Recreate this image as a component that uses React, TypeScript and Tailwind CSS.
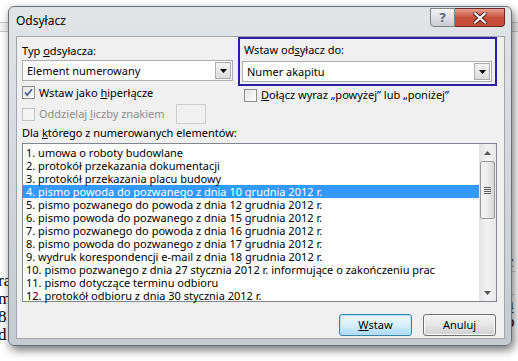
import React from 'react';

const items = [
  '1. umowa o roboty budowlane',
  '2. protokół przekazania dokumentacji',
  '3. protokół przekazania placu budowy',
  '4. pismo powoda do pozwanego z dnia 10 grudnia 2012 r.',
  '5. pismo pozwanego do powoda z dnia 12 grudnia 2012 r.',
  '6. pismo powoda do pozwanego z dnia 15 grudnia 2012 r.',
  '7. pismo pozwanego do powoda z dnia 16 grudnia 2012 r.',
  '8. pismo powoda do pozwanego z dnia 17 grudnia 2012 r.',
  '9. wydruk korespondencji e-mail z dnia 18 grudnia 2012 r.',
  '10. pismo pozwanego z dnia 27 stycznia 2012 r. informujące o zakończeniu prac',
  '11. pismo dotyczące terminu odbioru',
  '12. protokół odbioru z dnia 30 stycznia 2012 r.',
];

const DropArrow = () => (
  <div className="w-[16px] h-[17px] border border-[#a8acb1] bg-gradient-to-b from-[#f4f4f4] to-[#dcdcdc] flex items-center justify-center">
    <svg width="7" height="4" viewBox="0 0 7 4">
      <path d="M0 0h7L3.5 4z" fill="#000" />
    </svg>
  </div>
);

const Combo = ({ value, width }: { value: string; width: string }) => (
  <div className={`${width} h-[21px] border border-[#abadb3] bg-white flex items-center justify-between pl-[4px] pr-[1px]`}>
    <span>{value}</span>
    <DropArrow />
  </div>
);

const CheckBox = ({ checked, disabled }: { checked?: boolean; disabled?: boolean }) => (
  <div
    className={`w-[13px] h-[13px] border flex items-center justify-center shrink-0 ${
      disabled ? 'border-[#c4c4c4] bg-[#f4f4f4]' : 'border-[#8e8f8f] bg-gradient-to-br from-[#e6e6e6] to-[#fbfbfb]'
    }`}
  >
    {checked && (
      <svg width="9" height="9" viewBox="0 0 9 9">
        <path d="M1 4.5l2.2 2.6L8 1.2" stroke="#4a5f8f" strokeWidth="1.8" fill="none" />
      </svg>
    )}
  </div>
);

const Btn = ({ children, primary }: { children: React.ReactNode; primary?: boolean }) => (
  <div
    className={`w-[73px] h-[22px] rounded-[3px] border flex items-center justify-center ${
      primary
        ? 'border-[#3c7fb1] bg-gradient-to-b from-[#eaf6fd] via-[#d9f0fc] to-[#a7d9f5] shadow-[inset_0_0_0_1px_#b7e2fb]'
        : 'border-[#707070] bg-gradient-to-b from-[#f2f2f2] via-[#e6e6e6] to-[#d0d0d0] shadow-[inset_0_0_0_1px_#fcfcfc]'
    }`}
  >
    {children}
  </div>
);

const ScrollBar = () => (
  <div className="w-[17px] h-full bg-gradient-to-r from-[#e3e3e3] via-[#f3f3f3] to-[#e8e8e8] flex flex-col items-center">
    <div className="h-[17px] w-full flex items-center justify-center">
      <svg width="7" height="4" viewBox="0 0 7 4">
        <path d="M0 4h7L3.5 0z" fill="#555" />
      </svg>
    </div>
    <div className="w-[15px] h-[58px] rounded-[2px] border border-[#9a9a9a] bg-gradient-to-r from-[#f4f4f4] via-[#ececec] to-[#d6d6d6] flex flex-col items-center justify-center gap-[1px]">
      <div className="w-[7px] h-[1px] bg-[#5d5d5d]" />
      <div className="w-[7px] h-[1px] bg-[#5d5d5d]" />
      <div className="w-[7px] h-[1px] bg-[#5d5d5d]" />
      <div className="w-[7px] h-[1px] bg-[#5d5d5d]" />
    </div>
    <div className="flex-1" />
    <div className="h-[17px] w-full flex items-center justify-center">
      <svg width="7" height="4" viewBox="0 0 7 4">
        <path d="M0 0h7L3.5 4z" fill="#555" />
      </svg>
    </div>
  </div>
);

export default function App() {
  return (
    <div className="relative w-[518px] h-[361px] bg-white overflow-hidden text-[11px] text-black" style={{ fontFamily: '"Noto Sans", sans-serif' }}>
      {/* document behind the dialog */}
      <div className="absolute inset-0" style={{ fontFamily: '"Liberation Serif", serif' }}>
        <div className="h-[22px]" />
        <div className="h-[10px] border-y border-[#c8c8c8] bg-[#f3f3f3]" />
        <div className="absolute left-[-2px] top-[272px] text-[17px] leading-[18px]">
          <div>ra</div>
          <div>m</div>
          <div>8</div>
          <div>d</div>
        </div>
        <div className="absolute left-[506px] top-[253px] text-[17px] leading-[18px]">
          <div>c</div>
          <div className="h-[24px] border-y border-[#d0d0d0]" />
          <div>ą</div>
          <div>o</div>
        </div>
      </div>

      {/* dialog window */}
      <div className="absolute left-[8px] top-[6px] w-[504px] h-[340px] rounded-[6px] border border-[#6a6f73] bg-gradient-to-b from-[#e2e5e8] via-[#d3d7db] to-[#c5cacf] shadow-[2px_4px_10px_rgba(0,0,0,0.55)] flex flex-col pl-[7px] pr-[6px] pb-[6px]">
        <div className="h-[29px] flex items-start justify-between shrink-0">
          <span className="self-center pb-[1px] text-[12px]">Odsyłacz</span>
          <div className="flex pt-[1px]">
            <div className="w-[25px] h-[19px] rounded-bl-[4px] border border-[#7d8287] bg-gradient-to-b from-[#f1f3f5] via-[#dde1e5] to-[#c8cdd2] flex items-center justify-center text-[13px] font-bold text-[#5b6068]">
              ?
            </div>
            <div className="w-[50px] h-[19px] rounded-br-[4px] border border-l-0 border-[#6b2a22] bg-gradient-to-b from-[#e8a093] via-[#c9503d] to-[#c44a36] flex items-center justify-center">
              <svg width="14" height="12" viewBox="0 0 14 12">
                <path d="M2 1.5l10 9M12 1.5l-10 9" stroke="#4a1b14" strokeWidth="4" strokeLinecap="square" />
                <path d="M2 1.5l10 9M12 1.5l-10 9" stroke="#fff" strokeWidth="2.2" strokeLinecap="square" />
              </svg>
            </div>
          </div>
        </div>

        <div className="flex-1 bg-[#f0f0f0] border border-[#a0a6ac] flex flex-col pl-[5px] pr-[7px] leading-[16px]">
          <div className="flex gap-[5px]">
            <div className="w-[211px] flex flex-col pt-[6px]">
              <span>
                Typ <u>o</u>dsyłacza:
              </span>
              <div className="mt-[1px]">
                <Combo value="Element numerowany" width="w-[211px]" />
              </div>
              <div className="h-[17px] mt-[3px] flex items-center gap-[4px]">
                <CheckBox checked />
                <span className="whitespace-nowrap">
                  Wstaw jako <u>h</u>iperłącze
                </span>
              </div>
              <div className="h-[20px] mt-[3px] flex items-center">
                <CheckBox disabled />
                <span className="ml-[4px] w-[137px] whitespace-nowrap text-[#8d8d8d]">
                  Oddzielaj <u>l</u>iczby znakiem
                </span>
                <div className="w-[30px] h-[20px] border border-[#cdcdcd] bg-[#f0f0f0]" />
              </div>
            </div>
            <div className="flex-1 flex flex-col">
              <div className="border-2 border-[#2b1fa0] pt-[3px] pl-[2px] pr-[3px] pb-[2px]">
                <div className="pl-[2px]">
                  Wstaw od<u>s</u>yłacz do:
                </div>
                <div className="mt-[3px]">
                  <Combo value="Numer akapitu" width="w-full" />
                </div>
              </div>
              <div className="h-[18px] ml-[6px] flex items-center gap-[4px]">
                <CheckBox />
                <span className="whitespace-nowrap">
                  <u>D</u>ołącz wyraz „powyżej” lub „poniżej”
                </span>
              </div>
            </div>
          </div>

          <div className="mt-[1px]">
            Dla <u>k</u>tórego z numerowanych elementów:
          </div>
          <div className="mt-[2px] h-[159px] w-[475px] border border-[#828790] bg-white flex">
            <div className="flex-1 pt-[2px] leading-[13px]">
              {items.map((t, i) => (
                <div key={t} className={`h-[13px] pl-[3px] whitespace-nowrap ${i === 3 ? 'bg-[#3399ff] text-white' : ''}`}>
                  {t}
                </div>
              ))}
            </div>
            <ScrollBar />
          </div>

          <div className="mt-[12px] flex justify-end gap-[11px] pr-[1px]">
            <Btn primary>
              <u>W</u>staw
            </Btn>
            <Btn>Anuluj</Btn>
          </div>
        </div>
      </div>
    </div>
  );
}
